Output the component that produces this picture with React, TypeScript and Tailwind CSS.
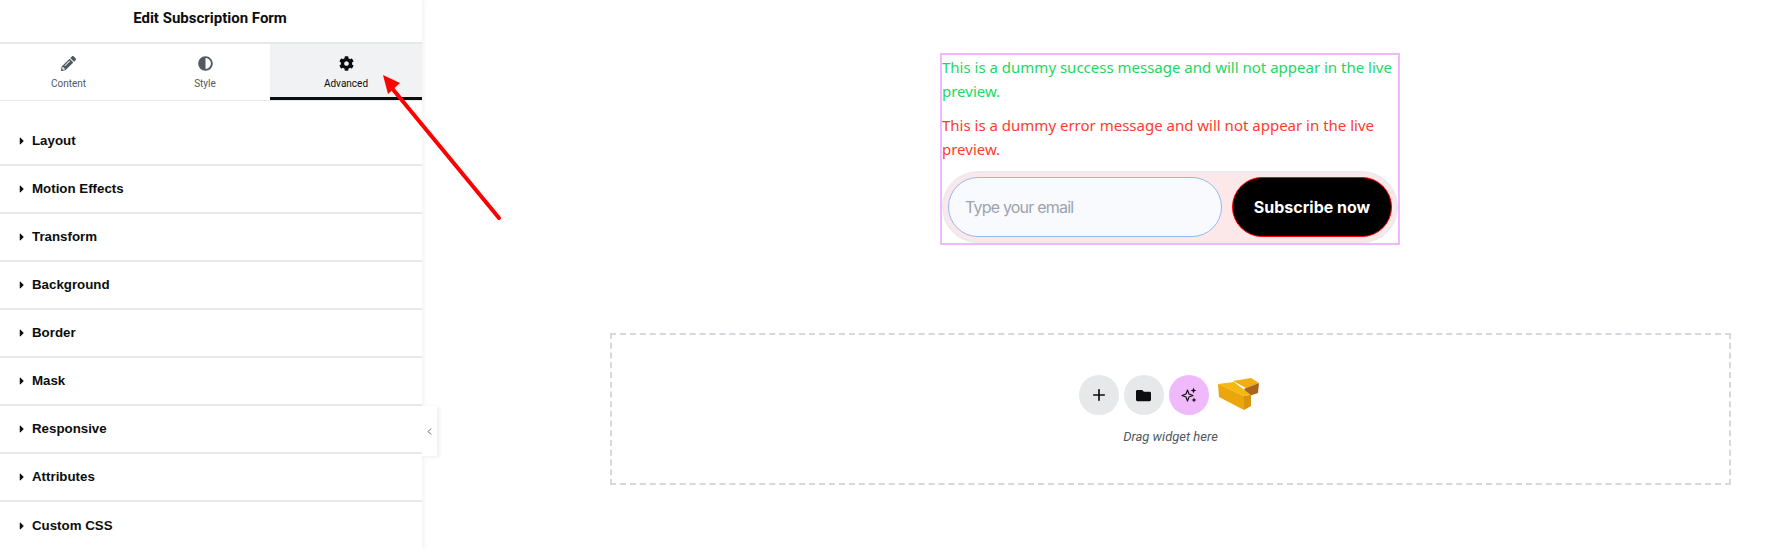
import { ChevronLeft, Plus } from "lucide-react";
import { FaAdjust, FaCaretRight, FaCog, FaFolder, FaPencilAlt } from "react-icons/fa";

const sections = [
  "Layout",
  "Motion Effects",
  "Transform",
  "Background",
  "Border",
  "Mask",
  "Responsive",
  "Attributes",
  "Custom CSS",
];

function Tab({ label, icon, active }: { label: string; icon: React.ReactNode; active?: boolean }) {
  return (
    <div
      className={
        active
          ? "flex h-[56px] flex-col items-center border-b-[3px] border-[#0c0d0e] bg-[#f1f2f3] pt-[11px] text-[#0c0d0e]"
          : "flex h-[56px] flex-col items-center pt-[11px] text-[#515962]"
      }
    >
      <span className="flex h-[16px] items-center text-[15px]">{icon}</span>
      <span className="mt-[6px] text-[10px] leading-[14px]">{label}</span>
    </div>
  );
}

function Sparkle() {
  return (
    <svg width="16" height="16" viewBox="0 0 16 16" fill="none">
      <path d="M6.5 3 8 7l4 1.5L8 10l-1.5 4L5 10 1 8.500 5 7z" stroke="#0c0d0e" strokeWidth="1.1" strokeLinejoin="round" />
      <path d="M12.500 0.500 13.300 2.700 15.500 3.500 13.300 4.300 12.500 6.500 11.700 4.300 9.500 3.500 11.700 2.700z" fill="#0c0d0e" />
      <path d="M13 10.500 13.700 12.300 15.500 13 13.700 13.700 13 15.500 12.300 13.700 10.500 13 12.300 12.300z" fill="#0c0d0e" />
    </svg>
  );
}

function BoxLogo() {
  return (
    <svg width="42" height="33" viewBox="0 0 42 33">
      <path d="M15 3 33 0 41 5 28 10z" fill="#f0ae12" />
      <path d="M41 5 40 15 31 18 26 11 28 10z" fill="#a9651f" />
      <path d="M0 6 16 4 33 17 26 18z" fill="#f6b710" />
      <path d="M0 6 26 18 26 32 1 19z" fill="#eba60b" />
      <path d="M26 18 33 17 33 28 26 32z" fill="#d8960c" />
    </svg>
  );
}

export default function App() {
  return (
    <div className="relative flex h-[549px] w-[1782px] overflow-hidden bg-white font-['Roboto',sans-serif]">
      <aside className="h-[549px] w-[422px] shrink-0 overflow-hidden bg-white shadow-[2px_0_4px_rgba(0,0,0,0.05)]">
        <h1 className="flex h-[44px] items-center justify-center border-b-2 border-[#e6e8ea] pb-[6px] pr-[2px] text-[15px] font-bold text-[#0c0d0e]">
          Edit Subscription Form
        </h1>
        <div className="grid grid-cols-[137px_133px_152px] border-b border-[#e6e8ea]">
          <Tab label="Content" icon={<FaPencilAlt />} />
          <div className="pl-[3px]">
            <Tab label="Style" icon={<FaAdjust />} />
          </div>
          <Tab label="Advanced" icon={<FaCog />} active />
        </div>
        <div className="pt-[17px] font-['Liberation_Sans',sans-serif]">
          {sections.map((name) => (
            <div
              key={name}
              className="flex h-[48px] items-center gap-[6px] border-b-2 border-[#e6e8ea] pb-[1px] pl-[18px] text-[13.3px] font-bold text-[#0c0d0e] last:border-b-0"
            >
              <FaCaretRight className="w-[8px] text-[12px]" />
              {name}
            </div>
          ))}
        </div>
      </aside>

      <main className="flex-1 pl-[188px] pr-[51px] pt-[53px]">
        <div className="ml-[330px] w-[460px] border-2 border-[#f0b9fb] font-['Noto_Sans',sans-serif] text-[15px] leading-[24px]">
          <p className="mb-[10px] text-[#1ed760]">This is a dummy success message and will not appear in the live preview.</p>
          <p className="mb-[10px] text-[#ff3b2f]">This is a dummy error message and will not appear in the live preview.</p>
          <div className="flex h-[72px] items-center justify-between rounded-full border-2 border-[#eceaf0] bg-[#fce8e8] px-[4px] font-['Inter',sans-serif] text-[16px]">
            <div className="flex h-[60px] w-[274px] items-center rounded-full border border-[#93b8f5] bg-[#f9fafe] pl-[16px] tracking-[-0.8px] text-[#9ca3af]">
              Type your email
            </div>
            <div className="flex h-[60px] w-[160px] items-center justify-center rounded-full border border-[#ff0000] bg-black font-bold text-white">
              Subscribe now
            </div>
          </div>
        </div>

        <div className="mt-[88px] flex h-[152px] flex-col items-center border-2 border-dashed border-[#d5d8dc] pt-[40px]">
          <div className="-ml-[3px] flex items-center gap-[5px]">
            <span className="flex h-[40px] w-[40px] items-center justify-center rounded-full bg-[#e6e8ea] text-[#0c0d0e]">
              <Plus size={18} strokeWidth={2.2} />
            </span>
            <span className="flex h-[40px] w-[40px] items-center justify-center rounded-full bg-[#e6e8ea] text-[#0c0d0e]">
              <FaFolder size={15} />
            </span>
            <span className="flex h-[40px] w-[40px] items-center justify-center rounded-full bg-[#f0b9fb]">
              <Sparkle />
            </span>
            <span className="ml-[4px] mb-[2px]">
              <BoxLogo />
            </span>
          </div>
          <p className="mt-[14px] text-[13px] italic leading-[16px] text-[#515962]">Drag widget here</p>
        </div>
      </main>

      <div className="absolute left-[422px] top-[406px] flex h-[50px] w-[15px] items-center justify-center bg-white text-[#515962] shadow-[2px_1px_4px_rgba(0,0,0,0.08)]">
        <ChevronLeft size={11} strokeWidth={2} />
      </div>

      <svg className="absolute left-0 top-0" width="1782" height="549" fill="none">
        <path d="M499 218 391 87" stroke="#ff0000" strokeWidth="4" strokeLinecap="round" />
        <path d="M383 75 400 83 388 94z" fill="#ff0000" />
      </svg>
    </div>
  );
}
